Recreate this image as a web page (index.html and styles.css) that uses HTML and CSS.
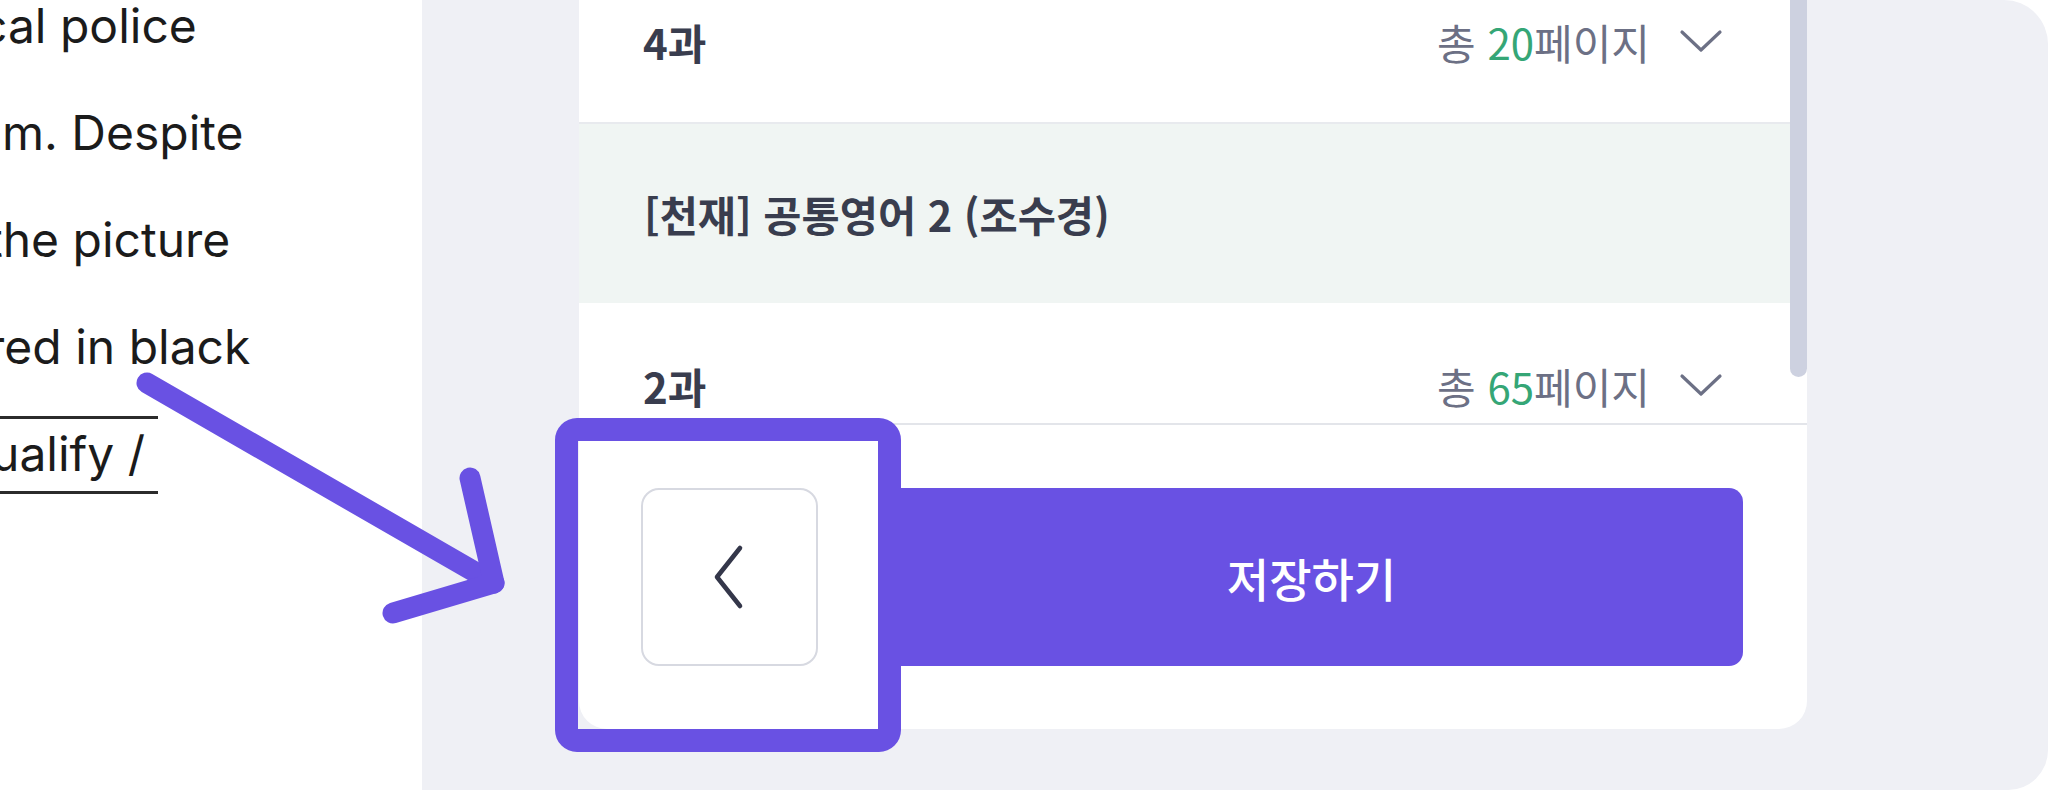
FILE: index.html
```html
<!DOCTYPE html>
<html lang="ko">
<head>
<meta charset="utf-8">
<title>교재 선택</title>
<link rel="stylesheet" href="styles.css">
</head>
<body>
<div class="page">
  <section class="doc">
    <div class="para">
      <div class="line l1">cal police</div>
      <div class="line l2">am. Despite</div>
      <div class="line l3">the picture</div>
      <div class="line l4">red in black</div>
      <div class="line l5"><span class="blank">ualify /</span></div>
    </div>
  </section>
  <section class="panel">
    <div class="card">
      <div class="list">
        <div class="rows">
          <div class="row">
            <span class="row-title">4과</span>
            <span class="row-meta">
              <span class="pages">총 <span class="count">20</span>페이지</span>
              <svg class="chev" width="44" height="24" viewBox="0 0 44 24"><polyline points="3,3 22,21 41,3" fill="none" stroke="currentColor" stroke-width="3.2" stroke-linecap="round" stroke-linejoin="round"/></svg>
            </span>
          </div>
          <div class="group">[천재] 공통영어 2 (조수경)</div>
          <div class="row">
            <span class="row-title">2과</span>
            <span class="row-meta">
              <span class="pages">총 <span class="count">65</span>페이지</span>
              <svg class="chev" width="44" height="24" viewBox="0 0 44 24"><polyline points="3,3 22,21 41,3" fill="none" stroke="currentColor" stroke-width="3.2" stroke-linecap="round" stroke-linejoin="round"/></svg>
            </span>
          </div>
        </div>
        <div class="track"><div class="thumb"></div></div>
      </div>
      <div class="footer">
        <button class="back" type="button" aria-label="뒤로">
          <svg width="36" height="66" viewBox="0 0 36 66"><polyline points="28,4 5,33 28,62" fill="none" stroke="currentColor" stroke-width="4.6" stroke-linecap="round" stroke-linejoin="round"/></svg>
        </button>
        <button class="save" type="button">저장하기</button>
      </div>
    </div>
  </section>
  <div class="highlight"></div>
  <svg class="arrow" width="2048" height="792" viewBox="0 0 2048 792">
    <g fill="none" stroke="#6951e3" stroke-width="21" stroke-linecap="round" stroke-linejoin="round">
      <line x1="147" y1="383" x2="494" y2="583"/>
      <polyline points="470,478 494,583 393,613"/>
    </g>
  </svg>
</div>
</body>
</html>
```

FILE: styles.css
```css
* { box-sizing: border-box; }
html, body { margin: 0; padding: 0; background: #ffffff; }
body { width: 2048px; height: 792px; overflow: hidden; }

.page {
  position: relative;
  display: flex;
  width: 2048px;
  height: 792px;
}

/* left document */
.doc {
  width: 422px;
  flex: none;
  overflow: hidden;
  background: #ffffff;
}
.para {
  margin-top: -28px;
  font-family: Inter, "Liberation Sans", sans-serif;
  font-size: 48px;
  line-height: 107px;
  color: #1b1b1b;
  white-space: nowrap;
}
.l1 { margin-left: -20px; }
.l2 { margin-left: -25px; }
.l3 { margin-left: -13px; }
.l4 { margin-left: -13px; }
.l5 { margin-left: -9px; }
.blank {
  display: inline-block;
  line-height: 58px;
  padding: 6px 13px 8px 0;
  border-top: 3px solid #2b2b2b;
  border-bottom: 3px solid #2b2b2b;
  vertical-align: baseline;
}

/* right panel */
.panel {
  flex: 1;
  height: 790px;
  background: #eff0f5;
  border-radius: 0 44px 40px 0;
  padding-left: 157px;
}
.card {
  width: 1228px;
  margin-top: -40px;
  background: #ffffff;
  border-radius: 28px;
  overflow: hidden;
  display: flex;
  flex-direction: column;
  font-family: "Noto Sans CJK KR", "Noto Sans", sans-serif;
}
.list {
  height: 463px;
  display: flex;
  overflow: hidden;
}
.rows { flex: 1; display: flex; flex-direction: column; }
.row {
  flex: none;
  height: 164px;
  display: flex;
  align-items: center;
  justify-content: space-between;
  padding: 0 67px 0 64px;
  border-bottom: 2px solid #e8eaee;
}
.row + .group + .row { border-bottom: 0; }
.row-title {
  font-size: 42px;
  font-weight: 700;
  color: #393d4e;
}
.row-meta {
  display: flex;
  align-items: center;
}
.pages {
  font-size: 42px;
  font-weight: 400;
  color: #6c7085;
  white-space: nowrap;
}
.count { color: #35a676; }
.chev { margin-left: 29px; color: #6c7085; }
.group {
  flex: none;
  height: 179px;
  display: flex;
  align-items: center;
  padding-left: 65px;
  background: #f0f5f3;
  font-size: 41.5px;
  font-weight: 700;
  color: #393d4e;
}
.track { width: 17px; flex: none; background: #ffffff; }
.thumb {
  height: 417px;
  background: #cdd1e0;
  border-radius: 0 0 9px 9px;
}

.footer {
  border-top: 2px solid #e3e5ea;
  padding: 63px 64px 63px 62px;
  display: flex;
  gap: 62px;
}
.back {
  width: 177px;
  height: 178px;
  flex: none;
  border: 2px solid #d7d9e1;
  border-radius: 18px;
  background: #ffffff;
  color: #34374a;
  display: flex;
  align-items: center;
  justify-content: center;
  padding: 0;
}
.save {
  flex: 1;
  height: 178px;
  border: 0;
  border-radius: 14px;
  background: #6951e3;
  color: #ffffff;
  font-family: "Noto Sans CJK KR", "Noto Sans", sans-serif;
  font-size: 46px;
  font-weight: 500;
}

/* annotations */
.highlight {
  position: absolute;
  left: 555px;
  top: 418px;
  width: 346px;
  height: 334px;
  border: 23px solid #6951e3;
  border-radius: 22px;
}
.arrow {
  position: absolute;
  left: 0;
  top: 0;
  pointer-events: none;
}
```
